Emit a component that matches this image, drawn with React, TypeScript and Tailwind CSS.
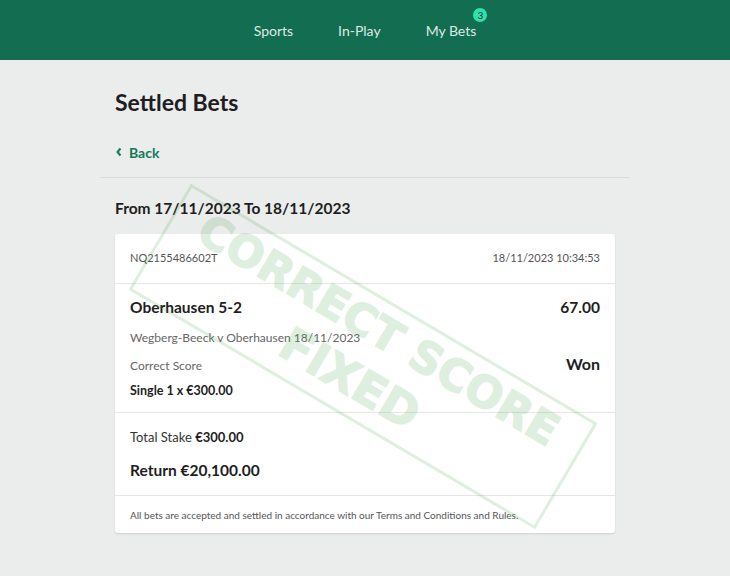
import React from 'react';

const font = { fontFamily: 'Lato, "Open Sans", sans-serif' };

const Stamp = () => (
  <div
    aria-hidden="true"
    className="pointer-events-none select-none absolute left-[127px] top-[295px] w-[472px] h-[123px] rotate-[30.5deg] opacity-[0.16] border-[3px] border-[#3ca03c] flex flex-col items-center pt-[6px] text-[#3ca03c] [-webkit-text-stroke:1.5px_#3ca03c]"
    style={{ fontFamily: '"DejaVu Sans", sans-serif' }}
  >
    <div className="text-[44px] font-bold leading-[44px] whitespace-nowrap">CORRECT SCORE</div>
    <div className="mt-[12px] text-[46px] font-bold leading-[44px]">FIXED</div>
  </div>
);

const App = () => {
  return (
    <div className="relative min-h-[576px] bg-[#ebecec] text-[#1e1e1e] overflow-hidden" style={font}>
      {/* Top navigation */}
      <header className="h-[60px] bg-[#136d51] flex items-center justify-center gap-[45px] text-[14px] text-[#dcebe4]">
        <span>Sports</span>
        <span>In-Play</span>
        <span className="relative">
          My Bets
          <span className="absolute -top-[12px] -right-[11px] w-[14px] h-[14px] rounded-full bg-[#2ce3a6] text-[#2a2a5a] text-[10px] leading-[14px] text-center">3</span>
        </span>
      </header>

      <main className="w-[530px] mx-auto">
        <div className="px-[15px] pt-[28px]">
          <h1 className="text-[23px] font-bold leading-[28px]">Settled Bets</h1>
          <a className="mt-[26px] flex items-center gap-[6px] h-[20px] text-[14px] font-bold text-[#127a5a]">
            <svg width="8" height="10" viewBox="0 0 8 10" fill="none">
              <path d="M5.5 1.5 2.5 5l3 3.5" stroke="#127a5a" strokeWidth="2" />
            </svg>
            Back
          </a>
        </div>
        <div className="mt-[15px] border-t border-[#d9dada]" />

        <div className="px-[15px]">
          <h2 className="mt-[18px] text-[15.5px] font-bold leading-[24px]">From 17/11/2023 To 18/11/2023</h2>

          <div className="mt-[14px] bg-white rounded-[3px] shadow-[0_1px_2px_rgba(0,0,0,0.12)]">
            <div className="h-[50px] px-[15px] flex items-center justify-between border-b border-[#e6e6e6] text-[11px] text-[#555]">
              <span>NQ2155486602T</span>
              <span>18/11/2023 10:34:53</span>
            </div>

            <div className="px-[15px] pt-[13px] pb-[12px] border-b border-[#e6e6e6]">
              <div className="h-[22px] flex items-center justify-between text-[15.5px] font-bold">
                <span>Oberhausen 5-2</span>
                <span>67.00</span>
              </div>
              <div className="mt-[10px] h-[18px] flex items-center text-[12px] text-[#666]">
                Wegberg-Beeck v Oberhausen 18/11/2023
              </div>
              <div className="mt-[10px] h-[18px] flex items-center justify-between">
                <span className="text-[12px] text-[#666]">Correct Score</span>
                <span className="text-[16px] font-bold -mt-[4px]">Won</span>
              </div>
              <div className="mt-[7px] h-[18px] flex items-center text-[12.5px] font-bold">Single 1 x €300.00</div>
            </div>

            <div className="px-[15px] pt-[15px] pb-[12px] border-b border-[#e6e6e6]">
              <div className="h-[20px] flex items-center text-[13px] text-[#333]">
                Total Stake&nbsp;<span className="font-bold text-[#1e1e1e]">€300.00</span>
              </div>
              <div className="mt-[11px] h-[24px] flex items-center text-[15.5px] font-bold">Return €20,100.00</div>
            </div>

            <div className="px-[15px] pt-[12px] pb-[10px] h-[37px] text-[10px] leading-[14px] text-[#555]">
              All bets are accepted and settled in accordance with our Terms and Conditions and Rules.
            </div>
          </div>
        </div>
      </main>

      <Stamp />
    </div>
  );
};

export default App;
